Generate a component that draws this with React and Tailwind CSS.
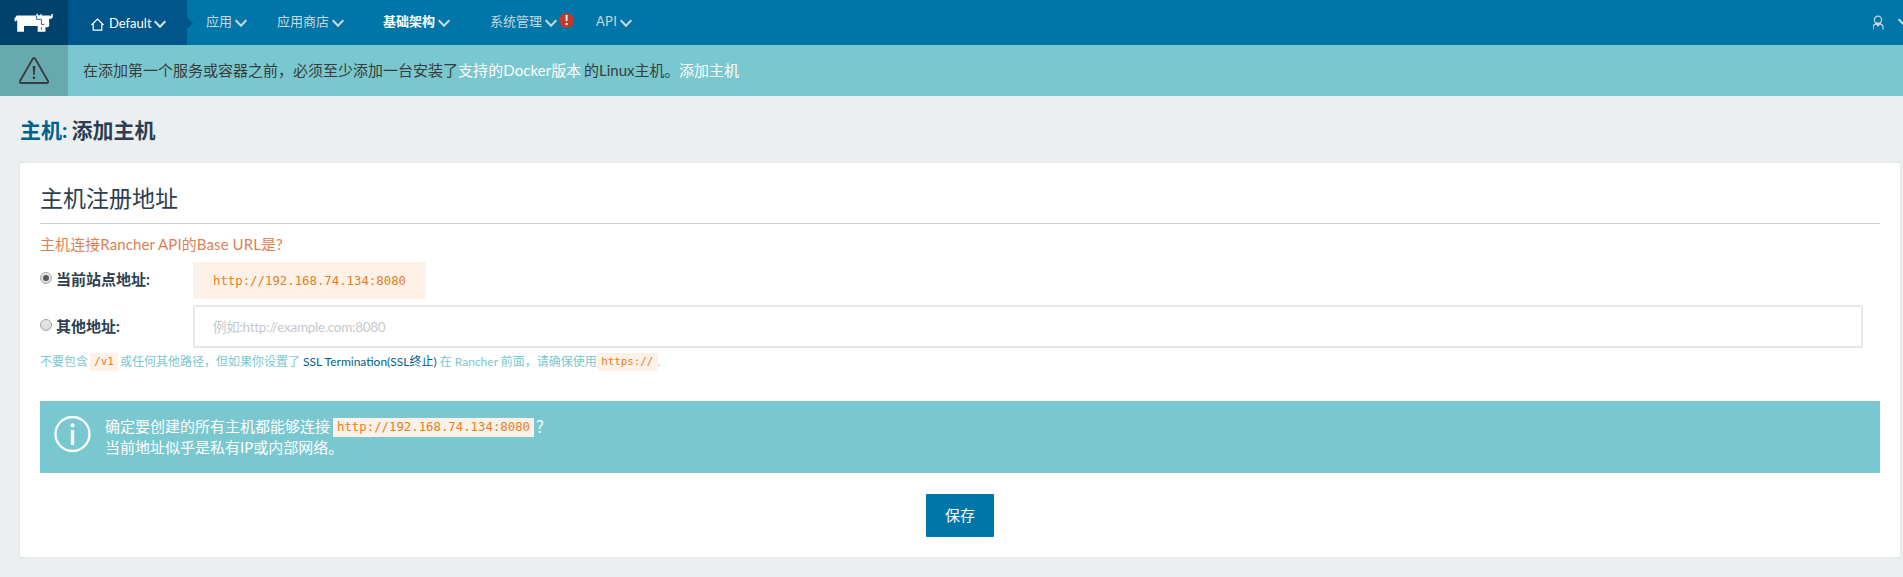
const Chevron = ({ className = "" }) => (
  <svg viewBox="0 0 12 9" className={"h-[9px] w-3 shrink-0 " + className} fill="none" stroke="currentColor" strokeWidth="2.1">
    <path d="M0.700 1.200 6 6.700l5.300-5.500" />
  </svg>
);

const NavItem = ({ label, className = "" }) => (
  <a className={"flex shrink-0 items-center " + className}>
    <span className="whitespace-nowrap">{label}</span>
    <Chevron className="ml-[3px] mt-[3px]" />
  </a>
);

const Logo = () => (
  <svg viewBox="0 0 40 20" className="h-5 w-10" fill="#fff">
    <path d="M2.700 2.600H22.500V.8h1.400v1.400h2.300V1.300h1.600v1.300h7.700L37.300 3V1h1.500v3.200l-1.400 1.600h-2.200v7.200l-1.200 1.300H31.500v4.500H23.700V13H10v5.800H3.200V7.500H2v1.200L.4 7.600V5.800z" />
    <path d="M22.600 3v3.400h4.800v5h3M27.400 14.200v2.600" fill="none" stroke="#00426b" strokeWidth=".8" />
  </svg>
);

const Code = ({ children, className = "" }) => (
  <code className={"bg-[#fdf1e8] font-['DejaVu_Sans_Mono',monospace] text-[#e67e22] " + className}>{children}</code>
);

const Radio = ({ checked }) => (
  <span className="mt-[-3px] flex size-3 shrink-0 items-center justify-center rounded-full border border-[#a5a5a5] bg-linear-to-b from-[#e8e8e8] to-[#dcdcdc]">
    {checked && <span className="size-1.5 rounded-full bg-[#5a5a5a]" />}
  </span>
);

export default function App() {
  return (
    <div className="h-[577px] w-full overflow-hidden bg-[#ebeff0] font-[Lato,'Noto_Sans_CJK_SC',sans-serif] text-[15px] text-[#2c3e50]">
      <header className="flex h-[45px] bg-[#0075a8] text-[13px] text-[#c7d7df]">
        <div className="flex w-[68px] shrink-0 items-center bg-[#00426b] pl-[14px]">
          <Logo />
        </div>
        <div className="flex w-[119px] shrink-0 items-center bg-[#00558b] pl-[23px] pt-[3px] text-[13.5px] text-white">
          <svg viewBox="0 0 13 13" className="mr-[5px] mt-px h-[13px] w-[13px]" fill="none" stroke="currentColor" strokeWidth="1.200">
            <path d="M.5 7 6.500 1l6 6M2.200 6v6.200h8.600V6" />
          </svg>
          <span className="w-[42px] text-[13px]">Default</span>
          <Chevron className="ml-[3px] mt-px text-[#d5e1e8]" />
        </div>
        <svg viewBox="0 0 6 12" className="mt-[17px] h-3 w-1.5 shrink-0" fill="#00558b">
          <path d="M0 0l6 6-6 6z" />
        </svg>
        <nav className="flex h-[44px] flex-1 items-center pl-[13px]">
          <NavItem label="应用" className="w-[71px]" />
          <NavItem label="应用商店" className="w-[106px]" />
          <NavItem label={<b className="text-white">基础架构</b>} className="w-[107px]" />
          <NavItem label="系统管理" className="w-[69px]" />
          <span className="mr-[22px] mt-[-3px] flex size-[15px] items-center justify-center rounded-full bg-[#c0392b] text-[13px] font-black leading-none text-white">!</span>
          <NavItem label={<span className="tracking-[0.3px]">API</span>} />
        </nav>
        <div className="flex h-[44px] w-[30px] shrink-0 items-center overflow-hidden">
          <svg viewBox="0 0 12 15" className="ml-[-1px] h-[15px] w-3 shrink-0" fill="none" stroke="currentColor" strokeWidth="1.200">
            <circle cx="6" cy="4.800" r="3.600" />
            <path d="M1 14.500v-2.300Q1 9.600 3.600 9.100h4.800Q11 9.600 11 12.200v2.300" />
            <path d="M3.600 8.400h4.800L6 11z" fill="currentColor" />
          </svg>
          <Chevron className="ml-[14px]" />
        </div>
      </header>

      <div className="flex h-[51px] bg-[#79c8cf]">
        <div className="flex w-[68px] shrink-0 items-center justify-center bg-[#67a9af]">
          <svg viewBox="0 0 30 27" className="h-[27px] w-[30px]" fill="none" stroke="#3b3b3b" strokeWidth="1.800" strokeLinejoin="round">
            <path d="M13.800 1.800Q15 .2 16.200 1.800L29 24Q29.500 25.800 28 26H2Q.5 25.800 1 24z" />
            <path d="M13.600 9h2.800l-.7 9h-1.400z" fill="#3b3b3b" stroke="none" />
            <circle cx="15" cy="20.800" r="1.400" fill="#3b3b3b" stroke="none" />
          </svg>
        </div>
        <p className="flex items-center whitespace-pre pl-[15px] text-[#3b3b3b]">
          <span>在添加第一个服务或容器之前，必须至少添加一台安装了</span>
          <span className="w-[123px] tracking-[0.080px] text-white">支持的Docker版本</span>
          <span className="ml-[3px] w-[95px]">的Linux主机。</span>
          <span className="text-white">添加主机</span>
        </p>
      </div>

      <h1 className="flex h-[67px] items-center pl-5 text-[21px] font-bold">
        <span className="mr-[4px] text-[#005f8f]">主机:</span>添加主机
      </h1>

      <main className="mr-[3px] ml-5 h-[394px] bg-white px-5 pt-[14px] shadow-[0_0_2px_rgba(0,0,0,0.08)]">
        <h2 className="flex h-[46px] items-center pb-[3px] text-[23px]">主机注册地址</h2>
        <div className="h-px bg-[#cccfd1]" />
        <p className="mt-[10px] flex h-[22px] items-center pb-[2px] tracking-[0.090px] text-[#dc8055]">主机连接Rancher API的Base URL是?</p>
        <div className="mt-[6px] flex h-[37px]">
          <label className="flex w-[153px] items-center gap-[4px] pb-[2px] font-bold">
            <Radio checked />当前站点地址:
          </label>
          <Code className="flex w-[233px] items-center justify-center pt-px text-[12.330px]">http://192.168.74.134:8080</Code>
        </div>
        <div className="mt-[6px] flex h-[43px]">
          <label className="flex w-[153px] items-center gap-[4px] pb-px font-bold">
            <Radio />其他地址:
          </label>
          <div className="flex w-[1670px] items-center rounded-[2px] border-2 border-[#e3e8e7] pl-[18px] pt-px text-[13.500px] tracking-[-0.270px] text-[#c5c9cd]">例如:http://example.com:8080</div>
        </div>
        <p className="mt-[4px] flex h-[19px] items-center whitespace-pre text-[12px] text-[#79c8cf]">
          <span className="mr-[2px]">不要包含</span>
          <Code className="mr-[2px] flex h-[18px] w-7 items-center justify-center rounded-[2px] pt-px text-[10.800px]">/v1</Code>
          <span>或任何其他路径，但如果你设置了</span>
          <span className="ml-[3px] text-[#005f8f]">SSL Termination(SSL终止)</span>
          <span className="ml-[3px]">在 Rancher 前面，请确保使用</span>
          <Code className="flex h-[18px] w-[61px] items-center justify-center rounded-[2px] pt-px text-[10.800px]">https://</Code>
          <span>.</span>
        </p>
        <div className="mt-[30px] flex h-[72px] rounded-[1px] bg-[#79c8cf] pl-[14px] pt-[15px] text-white">
          <svg viewBox="0 0 37 37" className="size-[37px] shrink-0" fill="none" stroke="currentColor" strokeWidth="2.300">
            <circle cx="18.500" cy="18" r="17" />
            <circle cx="18.500" cy="9.300" r="2.100" fill="currentColor" stroke="none" />
            <path d="M18.500 14v15" strokeWidth="3.400" />
          </svg>
          <div className="ml-[14px]">
            <p className="flex h-[21px] items-center">
              <span>确定要创建的所有主机都能够连接</span>
              <Code className="ml-[3px] mr-[2px] mt-[2px] flex h-[19px] w-[201px] items-center justify-center text-[12.330px]">http://192.168.74.134:8080</Code>
              <span>？</span>
            </p>
            <p className="flex h-[21px] items-center">当前地址似乎是私有IP或内部网络。</p>
          </div>
        </div>
        <div className="mt-[21px] flex justify-center">
          <button className="h-[43px] w-[68px] rounded-[1px] bg-[#0075a8] text-white">保存</button>
        </div>
      </main>
    </div>
  );
}
